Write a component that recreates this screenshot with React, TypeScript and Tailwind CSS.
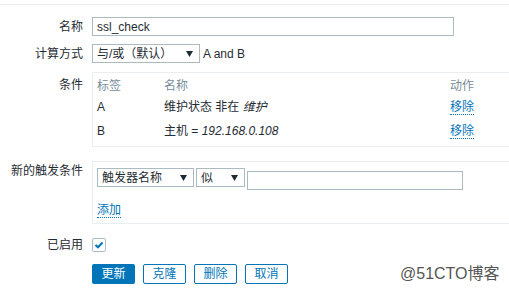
import React from "react";

const Arrow = () => (
  <svg width="7" height="6" viewBox="0 0 7 6" className="shrink-0">
    <path d="M0 0 H7 L3.5 6 Z" fill="#1f2c33" />
  </svg>
);

const Select = ({ label, width }: { label: string; width: string }) => (
  <div
    className={`${width} h-[19px] border border-[#acbbc2] bg-white flex items-center justify-between pl-[4px] pr-[6px] text-[12px] text-[#1f2c33]`}
  >
    <span>{label}</span>
    <Arrow />
  </div>
);

const Label = ({ children, top }: { children: React.ReactNode; top?: boolean }) => (
  <div className={`w-[83px] shrink-0 text-right text-[12px] text-[#1f2c33] ${top ? "self-start" : ""}`}>
    {children}
  </div>
);

const LinkBtn = ({ children }: { children: React.ReactNode }) => (
  <span className="text-[12px] leading-[14px] text-[#0275b8] border-b border-dotted border-[#0275b8]">
    {children}
  </span>
);

const conditions = [
  { tag: "A", name: <>维护状态 非在 <i>维护</i></> },
  { tag: "B", name: <>主机 = <i>192.168.0.108</i></> },
];

export default function App() {
  return (
    <div className="relative w-[509px] h-[289px] overflow-hidden bg-white font-['Liberation_Sans','Noto_Sans_CJK_SC',sans-serif] text-[#1f2c33]">
      <div className="pt-[4px]">
        <div className="border-t border-[#ebeef0]" />
      </div>

      {/* name */}
      <div className="mt-[12px] flex items-center gap-[9px]">
        <Label>名称</Label>
        <div className="w-[362px] h-[19px] border border-[#acbbc2] flex items-center px-[4px] text-[12px]">
          ssl_check
        </div>
      </div>

      {/* calc type */}
      <div className="mt-[8px] flex items-center gap-[9px]">
        <Label>计算方式</Label>
        <div className="flex items-center gap-[3px]">
          <Select label="与/或（默认）" width="w-[108px]" />
          <span className="text-[12px]">A and B</span>
        </div>
      </div>

      {/* conditions */}
      <div className="mt-[9px] flex gap-[9px]">
        <Label top>
          <div className="pt-[4px]">条件</div>
        </Label>
        <div className="w-[460px] h-[75px] shrink-0 border border-[#ebeef0] pl-[4px] pt-[4px] text-[12px]">
          <div className="grid grid-cols-[67px_286px_1fr] h-[15px] items-center text-[#768d99]">
            <span>标签</span>
            <span>名称</span>
            <span>动作</span>
          </div>
          {conditions.map((c) => (
            <div key={c.tag} className="grid grid-cols-[67px_286px_1fr] h-[24px] items-center pt-[6px]">
              <span>{c.tag}</span>
              <span>{c.name}</span>
              <span>
                <LinkBtn>移除</LinkBtn>
              </span>
            </div>
          ))}
        </div>
      </div>

      {/* new condition */}
      <div className="mt-[14px] flex gap-[9px]">
        <Label top>
          <div className="pt-[1px]">新的触发条件</div>
        </Label>
        <div className="w-[460px] h-[63px] shrink-0 border border-[#ebeef0] pl-[4px] pt-[6px]">
          <div className="flex items-start gap-[2px]">
            <Select label="触发器名称" width="w-[97px]" />
            <Select label="似" width="w-[49px]" />
            <div className="mt-[3px] w-[216px] h-[19px] border border-[#acbbc2]" />
          </div>
          <div className="mt-[7px]">
            <LinkBtn>添加</LinkBtn>
          </div>
        </div>
      </div>

      {/* enabled */}
      <div className="mt-[14px] h-[14px] flex items-center gap-[9px]">
        <Label>已启用</Label>
        <div className="w-[14px] h-[14px] border border-[#acbbc2] rounded-[2px] flex items-center justify-center">
          <svg width="10" height="8" viewBox="0 0 10 8">
            <path d="M1.5 4 L4 6.3 L8.5 1.5" fill="none" stroke="#0275b8" strokeWidth="2" />
          </svg>
        </div>
      </div>

      {/* buttons */}
      <div className="mt-[12px] flex gap-[8px] pl-[92px]">
        <button className="w-[43px] h-[20px] rounded-[2px] bg-[#0275b8] text-white text-[12px]">更新</button>
        <button className="w-[43px] h-[20px] rounded-[2px] border border-[#0275b8] text-[#0275b8] text-[12px]">克隆</button>
        <button className="w-[43px] h-[20px] rounded-[2px] border border-[#0275b8] text-[#0275b8] text-[12px]">删除</button>
        <button className="w-[43px] h-[20px] rounded-[2px] border border-[#0275b8] text-[#0275b8] text-[12px]">取消</button>
      </div>

      <div className="absolute left-[400px] top-[262px] text-[16px] text-[#555] [text-shadow:0_0_2px_#fff]">
        @51CTO博客
      </div>
    </div>
  );
}
